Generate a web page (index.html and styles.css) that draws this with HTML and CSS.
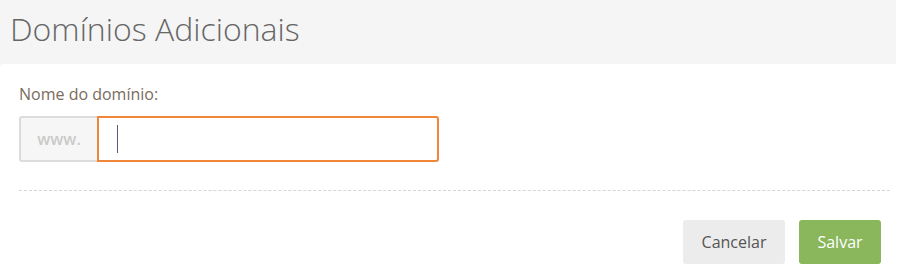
FILE: index.html
```html
<!DOCTYPE html>
<html lang="pt">
<head>
<meta charset="utf-8">
<title>Domínios Adicionais</title>
<link rel="stylesheet" href="styles.css">
</head>
<body>
<div class="page">
  <header class="head">
    <h1 class="title">Domínios Adicionais</h1>
  </header>
  <section class="card">
    <label class="label" for="dominio">Nome do domínio:</label>
    <div class="group">
      <span class="addon">www.</span>
      <div class="field">
        <input id="dominio" class="input" type="text">
        <span class="caret"></span>
      </div>
    </div>
    <hr class="sep">
    <div class="actions">
      <button class="btn btn-cancel" type="button">Cancelar</button>
      <button class="btn btn-save" type="button">Salvar</button>
    </div>
  </section>
</div>
</body>
</html>
```
FILE: styles.css
```css
* { box-sizing: border-box; }
html, body { margin: 0; padding: 0; background: #fff; }
body { font-family: "Open Sans", "Liberation Sans", sans-serif; }
.page { width: 905px; height: 277px; overflow: hidden; }
.head {
  width: 896px;
  height: 68px;
  background: #f5f5f5;
  padding: 8px 0 0 10px;
}
.title {
  margin: 0;
  font-weight: 300;
  font-size: 32px;
  line-height: 42px;
  color: #666;
}
.card {
  position: relative;
  margin-top: -4px;
  background: #fff;
  border-radius: 4px 0 0 0;
  padding: 19px 15px 0 19px;
}
.label {
  display: block;
  font-size: 16px;
  line-height: 22px;
  color: #7a6b5d;
  margin-bottom: 11px;
}
.group { display: flex; width: 420px; height: 46px; }
.addon {
  width: 78px;
  display: flex;
  align-items: center;
  justify-content: center;
  background: #f6f6f6;
  border: 2px solid #dcdcdc;
  border-right: 0;
  border-radius: 3px 0 0 3px;
  color: #cacaca;
  font-size: 16px;
  font-weight: 600;
}
.field { position: relative; flex: 1; }
.input {
  width: 100%;
  height: 46px;
  border: 2px solid #ef8638;
  border-radius: 0 3px 3px 0;
  outline: none;
  background: #fff;
  font-family: inherit;
  font-size: 18px;
  padding: 0 18px;
  caret-color: transparent;
}
.caret {
  position: absolute;
  left: 20px;
  top: 9px;
  width: 1px;
  height: 28px;
  background: #5a5a7a;
}
.sep {
  margin: 28px 0 0 0;
  border: 0;
  border-top: 1px dashed #d6d6d6;
  height: 0;
}
.actions {
  display: flex;
  justify-content: flex-end;
  gap: 14px;
  margin-top: 29px;
  padding-right: 9px;
}
.btn {
  height: 44px;
  border: 0;
  border-radius: 3px;
  font-family: inherit;
  font-size: 16px;
  padding: 0 18px;
  cursor: pointer;
}
.btn-cancel { width: 102px; background: #ececec; color: #555; }
.btn-save { width: 82px; background: #8ab65c; color: #fff; }
```
